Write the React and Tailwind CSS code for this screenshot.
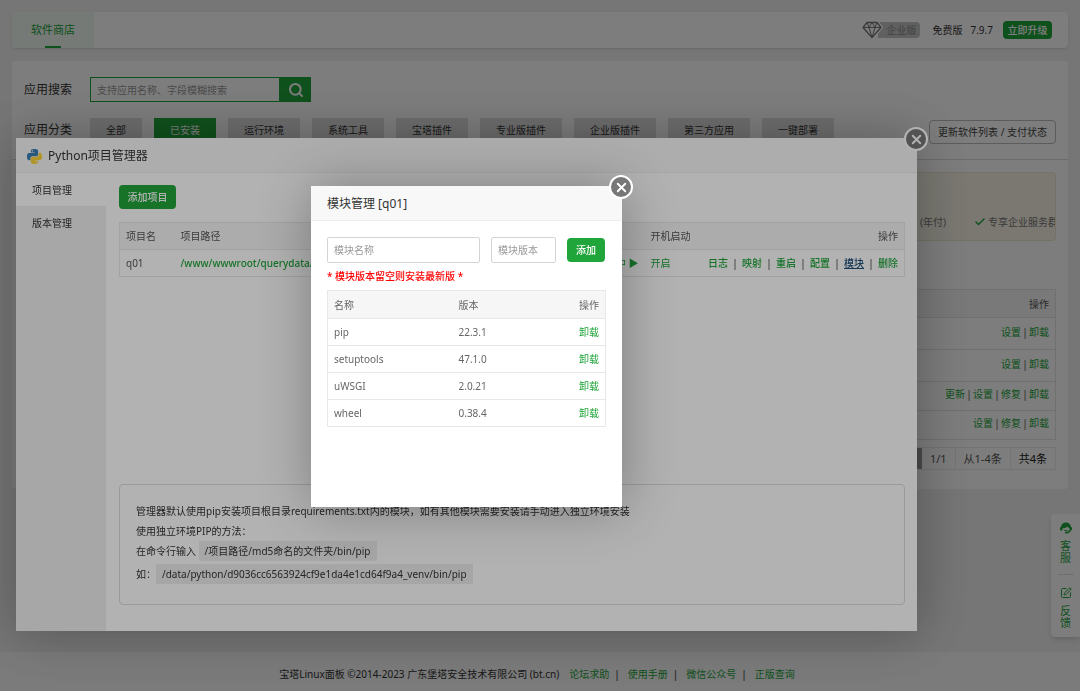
import React from "react";
import { Search, X, Check, SquarePen } from "lucide-react";

const pythonHalf =
  "M14.25.18l.9.2.73.26.59.3.45.32.34.34.25.34.16.33.1.3.04.26.02.2-.01.13V8.5l-.05.63-.13.55-.21.46-.26.38-.3.31-.33.25-.35.19-.35.14-.33.1-.3.07-.26.04-.21.02H8.77l-.69.05-.59.14-.5.22-.41.27-.33.32-.27.35-.2.36-.15.37-.1.35-.07.32-.04.27-.02.21v3.06H3.17l-.21-.03-.28-.07-.32-.12-.35-.18-.36-.26-.36-.36-.35-.46-.32-.59-.28-.73-.21-.88-.14-1.05-.05-1.23.06-1.22.16-1.04.24-.87.32-.71.36-.57.4-.44.42-.33.42-.24.4-.16.36-.1.32-.05.24-.01h.16l.06.01h8.16v-.83H6.18l-.01-2.75-.02-.37.05-.34.11-.31.17-.28.25-.26.31-.23.38-.2.44-.18.51-.15.58-.12.64-.1.71-.06.77-.04.84-.02 1.27.05zm-6.3 1.98l-.23.33-.08.41.08.41.23.34.33.22.41.09.41-.09.33-.22.23-.34.08-.41-.08-.41-.23-.33-.33-.22-.41-.09-.41.09z";

const categories = ["全部", "已安装", "运行环境", "系统工具", "宝塔插件", "专业版插件", "企业版插件", "第三方应用", "一键部署"];

const softwareRows = [
  { height: "h-8", actions: ["设置", "卸载"] },
  { height: "h-8", actions: ["设置", "卸载"] },
  { height: "h-[29px]", actions: ["更新", "设置", "修复", "卸载"] },
  { height: "h-[29px]", actions: ["设置", "修复", "卸载"] },
];

const modules = [
  ["pip", "22.3.1"],
  ["setuptools", "47.1.0"],
  ["uWSGI", "2.0.21"],
  ["wheel", "0.38.4"],
];

function PythonLogo() {
  return (
    <svg viewBox="0 0 24 24" className="size-[15px] shrink-0" aria-hidden="true">
      <path d={pythonHalf} fill="#3b7fb5" />
      <path d={pythonHalf} fill="#ffd63a" transform="rotate(180 12 12)" />
    </svg>
  );
}

function DiamondIcon() {
  const outline = "M5 2.5h10l4 5-9 10-9-10z";
  return (
    <svg viewBox="0 0 20 20" className="z-10 size-5 shrink-0 overflow-visible" fill="none" strokeLinejoin="round" aria-hidden="true">
      <path d={outline} fill="#fff" stroke="#fff" strokeWidth="4" />
      <path d={outline} stroke="#777" strokeWidth="1.3" />
      <path d="M1 7.5h18M5 2.5l2 5 3 10 3-10 2-5M7 7.5l3-5 3 5" stroke="#777" strokeWidth="1" />
    </svg>
  );
}

function ServiceIcon() {
  return (
    <svg viewBox="0 0 24 24" className="size-3" fill="currentColor" aria-hidden="true">
      <path d="M12 1C6.500 1 2.600 4.600 2.200 9.500 1 9.800 0 10.800 0 12.300v2.200C0 16 1.200 17 2.700 17H5v-4.500c4.500.3 8-1.200 10-3.500 1 2 2.300 3 4 3.500V15c-.8 2.500-3 4.500-6 5h-3v3h4c3.600-.3 6.600-2.700 7.700-6 1.300-.1 2.300-1.200 2.300-2.500v-2.200c0-1.500-1-2.500-2.200-2.800C21.400 4.600 17.500 1 12 1z" />
      <path d="M8 16c1 2 2.400 2.700 4 2.700s3-.7 4-2.700z" />
    </svg>
  );
}

function CloseButton() {
  return (
    <button
      type="button"
      aria-label="关闭"
      className="absolute -top-[11px] -right-[11px] flex size-6 items-center justify-center rounded-full border-2 border-white bg-[#777] text-white"
    >
      <X className="size-[15px]" strokeWidth={3} />
    </button>
  );
}

function Link({ children, className = "text-[#20a53a]" }) {
  return (
    <a href="#" className={className}>
      {children}
    </a>
  );
}

function StorePage() {
  return (
    <div className="flex min-h-screen flex-col bg-[#f0f0f0]">
      <main className="flex flex-1 flex-col gap-[13px] px-3 pt-3">
        <header className="flex h-9 items-center justify-between rounded bg-white pr-4 shadow-sm">
          <nav className="h-full">
            <a href="#" className="flex h-full w-[82px] flex-col items-center justify-between rounded-l bg-[#eff9f1] pt-2 text-[11px] leading-5 text-[#20a53a]">
              软件商店
              <span className="h-0.5 w-4 bg-[#20a53a]" />
            </a>
          </nav>
          <div className="flex items-center text-[#333]">
            <DiamondIcon />
            <span className="-ml-1 rounded-r-sm bg-[#c4c4c4] py-px pr-1 pl-2 leading-[14px] text-[#888]">企业版</span>
            <span className="ml-3">免费版</span>
            <span className="ml-2">7.9.7</span>
            <button type="button" className="ml-2.5 h-[18px] w-[49px] rounded-sm bg-[#20a53a] font-medium text-white">
              立即升级
            </button>
          </div>
        </header>

        <section className="rounded bg-white pb-[19px]">
          <div className="flex items-center pt-4 pl-3">
            <label htmlFor="app-search" className="w-[66px] text-xs">应用搜索</label>
            <input
              id="app-search"
              placeholder="支持应用名称、字段模糊搜索"
              className="h-[25px] w-[190px] border border-[#20a53a] px-1.5 placeholder:text-[#999]"
            />
            <button type="button" aria-label="搜索" className="flex h-[25px] w-[31px] items-center justify-center bg-[#20a53a] text-white">
              <Search className="size-4" strokeWidth={3} />
            </button>
          </div>
          <div className="flex justify-between border-b border-[#ddd] pt-4 pr-3 pb-[15px] pl-3">
            <div className="flex h-6 items-center">
              <span className="w-[66px] text-xs">应用分类</span>
              <div className="flex gap-3">
                {categories.map((name) => (
                  <button
                    type="button"
                    key={name}
                    className={name === "已安装" ? "h-6 bg-[#20a53a] px-4 text-white" : "h-6 bg-[#dfdfdf] px-4 text-[#333]"}
                  >
                    {name}
                  </button>
                ))}
              </div>
            </div>
            <button type="button" className="mt-0.5 h-6 rounded-sm border border-[#bbb] px-2 text-[#444]">
              更新软件列表 / 支付状态
            </button>
          </div>

          <div className="mx-3 mt-3 flex h-[69px] items-end justify-end overflow-hidden rounded-sm border border-[#eee6cf] bg-[#f9f5e7] pb-2.5 text-[#777]">
            <span>(年付)</span>
            <Check className="mr-0.5 mb-0.5 ml-7 size-3 text-[#20a53a]" strokeWidth={3} />
            <span className="w-[67px] overflow-hidden whitespace-nowrap">专享企业服务群</span>
          </div>

          <div className="mt-12 px-3">
            <table className="w-full border-collapse border border-[#e4e4e4] text-[#555]">
              <thead>
                <tr className="h-7 bg-[#f6f6f6]">
                  <th className="pr-[3px] text-right font-normal">首页显示</th>
                  <th className="w-[135px] pr-1.5 text-right font-normal">操作</th>
                </tr>
              </thead>
              <tbody>
                {softwareRows.map((row, i) => (
                  <tr key={i} className={`border-t border-[#e4e4e4] ${row.height}`}>
                    <td />
                    <td className="pr-1.5 pb-1">
                      <div className="flex justify-end">
                        {row.actions.map((action, j) => (
                          <React.Fragment key={action}>
                            {j > 0 && <span className="w-2 text-center">|</span>}
                            <Link>{action}</Link>
                          </React.Fragment>
                        ))}
                      </div>
                    </td>
                  </tr>
                ))}
              </tbody>
            </table>
            <div className="mt-[7px] flex justify-end text-[11px] text-[#555]">
              <div className="flex h-[23px] items-center border border-[#ececec]">
                <span className="flex h-full w-6 items-center justify-center bg-[#999] text-white">1</span>
                <span className="px-2">1/1</span>
                <span className="flex h-full items-center border-x border-[#ececec] px-2">从1-4条</span>
                <span className="px-2 text-[#222]">共4条</span>
              </div>
            </div>
          </div>
        </section>
      </main>

      <footer className="flex h-[39px] items-center justify-center bg-[#fafafa] pt-1 pr-[6px] text-[#333]">
        <span className="mr-2.5">宝塔Linux面板 ©2014-2023 广东堡塔安全技术有限公司 (bt.cn)</span>
        {["论坛求助", "使用手册", "微信公众号", "正版查询"].map((name, i) => (
          <React.Fragment key={name}>
            {i > 0 && <span className="mr-2 ml-[5px]">|</span>}
            <Link>{name}</Link>
          </React.Fragment>
        ))}
      </footer>

      <aside className="absolute top-[514px] right-0 flex w-[29px] flex-col items-center rounded-l bg-white py-2 text-[11px] leading-3 text-[#20a53a] shadow-md">
        <a href="#" className="flex flex-col items-center gap-1.5">
          <ServiceIcon />
          <span className="w-[11px]">客服</span>
        </a>
        <span className="mt-2.5 mb-3 h-px w-4 bg-[#e0e0e0]" />
        <a href="#" className="flex flex-col items-center gap-1.5">
          <SquarePen className="size-3" />
          <span className="w-[11px]">反馈</span>
        </a>
      </aside>
    </div>
  );
}

function ProjectDialog() {
  return (
    <div role="dialog" aria-label="Python项目管理器" className="relative flex h-[493px] w-full flex-col bg-white shadow-[1px_1px_50px_rgba(0,0,0,0.3)]">
      <CloseButton />
      <h2 className="flex h-[35px] shrink-0 items-center gap-1.5 border-b border-[#eee] bg-[#f8f8f8] pt-0.5 pl-[11px] text-xs text-[#333]">
        <PythonLogo />
        Python项目管理器
      </h2>
      <div className="flex flex-1">
        <nav className="w-[90px] shrink-0 bg-[#f0f0f0] text-[#333]">
          <a href="#" className="flex h-[33px] items-center bg-white pl-4">项目管理</a>
          <a href="#" className="flex h-[33px] items-center pl-4">版本管理</a>
        </nav>
        <div className="flex min-w-0 flex-1 flex-col items-stretch pt-3 pr-3 pb-[26px] pl-[13px]">
          <button type="button" className="h-6 w-[57px] self-start rounded-sm bg-[#20a53a] font-medium text-white">
            添加项目
          </button>
          <table className="mt-[13px] w-full table-fixed border-collapse border border-[#e8e8e8] text-[#555]">
            <thead>
              <tr className="h-[27px] bg-[#f6f6f6] text-left">
                <th className="w-[55px] pl-1.5 font-normal">项目名</th>
                <th className="pl-1.5 font-normal">项目路径</th>
                <th className="w-[120px] font-normal"><span className="pl-16">状态</span></th>
                <th className="w-[54px] font-normal">开机启动</th>
                <th className="w-[200px] pr-1.5 text-right font-normal">操作</th>
              </tr>
            </thead>
            <tbody>
              <tr className="h-[27px] border-t border-[#e8e8e8]">
                <td className="pl-1.5">q01</td>
                <td className="pl-1.5 font-medium text-[#20a53a]">/www/wwwroot/querydata/</td>
                <td className="pr-3 text-right text-[#20a53a]">运行中 ▶</td>
                <td className="text-[#20a53a]">开启</td>
                <td className="pr-1.5 font-medium">
                  <div className="flex justify-end whitespace-nowrap">
                    {["日志", "映射", "重启", "配置", "模块", "删除"].map((name, i) => (
                      <React.Fragment key={name}>
                        {i > 0 && <span className="w-[14px] text-center">|</span>}
                        <Link className={name === "模块" ? "text-[#23527c] underline" : "text-[#20a53a]"}>{name}</Link>
                      </React.Fragment>
                    ))}
                  </div>
                </td>
              </tr>
            </tbody>
          </table>
          <div className="mt-auto h-[121px] rounded-sm border border-[#ddd] px-4 pt-4 leading-5 text-[#333]">
            <p>管理器默认使用pip安装项目根目录requirements.txt内的模块，如有其他模块需要安装请手动进入独立环境安装</p>
            <p>使用独立环境PIP的方法：</p>
            <p>
              在命令行输入 <code className="inline-block bg-[#eee] px-1.5 font-[inherit]">/项目路径/md5命名的文件夹/bin/pip</code>
            </p>
            <p className="mt-[3px]">
              如：<code className="inline-block bg-[#eee] px-1.5 font-[inherit]">/data/python/d9036cc6563924cf9e1da4e1cd64f9a4_venv/bin/pip</code>
            </p>
          </div>
        </div>
      </div>
    </div>
  );
}

function ModuleDialog() {
  return (
    <div role="dialog" aria-label="模块管理" className="relative h-[321px] w-[311px] bg-white shadow-[1px_1px_50px_rgba(0,0,0,0.3)]">
      <CloseButton />
      <h2 className="flex h-[35px] items-center border-b border-[#eee] bg-[#f8f8f8] px-4 pt-0.5 text-xs text-[#333]">模块管理 [q01]</h2>
      <div className="px-4 pt-4 text-[#666]">
        <form className="flex items-center gap-[11px]">
          <input aria-label="模块名称" placeholder="模块名称" className="h-[26px] w-[153px] rounded-xs border border-[#d4d4d4] px-1.5 placeholder:text-[#999]" />
          <input aria-label="模块版本" placeholder="模块版本" className="h-[26px] w-[65px] rounded-xs border border-[#d4d4d4] px-1.5 placeholder:text-[#999]" />
          <button type="button" className="h-6 w-[38px] rounded-sm bg-[#20a53a] font-medium text-white">添加</button>
        </form>
        <p className="mt-[5px] font-medium text-[#f00]">* 模块版本留空则安装最新版 *</p>
        <table className="mt-1.5 w-full border-collapse border border-[#e8e8e8]">
          <thead>
            <tr className="h-7 bg-[#f6f6f6] text-left">
              <th className="w-[125px] pl-1.5 font-normal">名称</th>
              <th className="pl-1.5 font-normal">版本</th>
              <th className="pr-1.5 text-right font-normal">操作</th>
            </tr>
          </thead>
          <tbody>
            {modules.map(([name, version]) => (
              <tr key={name} className="h-[27px] border-t border-[#e8e8e8]">
                <td className="pl-1.5">{name}</td>
                <td className="pl-1.5">{version}</td>
                <td className="pr-1.5 text-right"><Link>卸载</Link></td>
              </tr>
            ))}
          </tbody>
        </table>
      </div>
    </div>
  );
}

export default function App() {
  return (
    <div className="relative overflow-hidden font-['Noto_Sans','Noto_Sans_CJK_SC',sans-serif] text-[10px] leading-4 text-[#333]">
      <StorePage />
      <div className="fixed inset-0 z-20 bg-black/30 pt-[138px] pr-[163px] pl-4">
        <ProjectDialog />
      </div>
      <div className="fixed inset-0 z-30 flex items-start justify-center bg-black/30 pt-[186px] pr-[163px] pl-4">
        <ModuleDialog />
      </div>
    </div>
  );
}
